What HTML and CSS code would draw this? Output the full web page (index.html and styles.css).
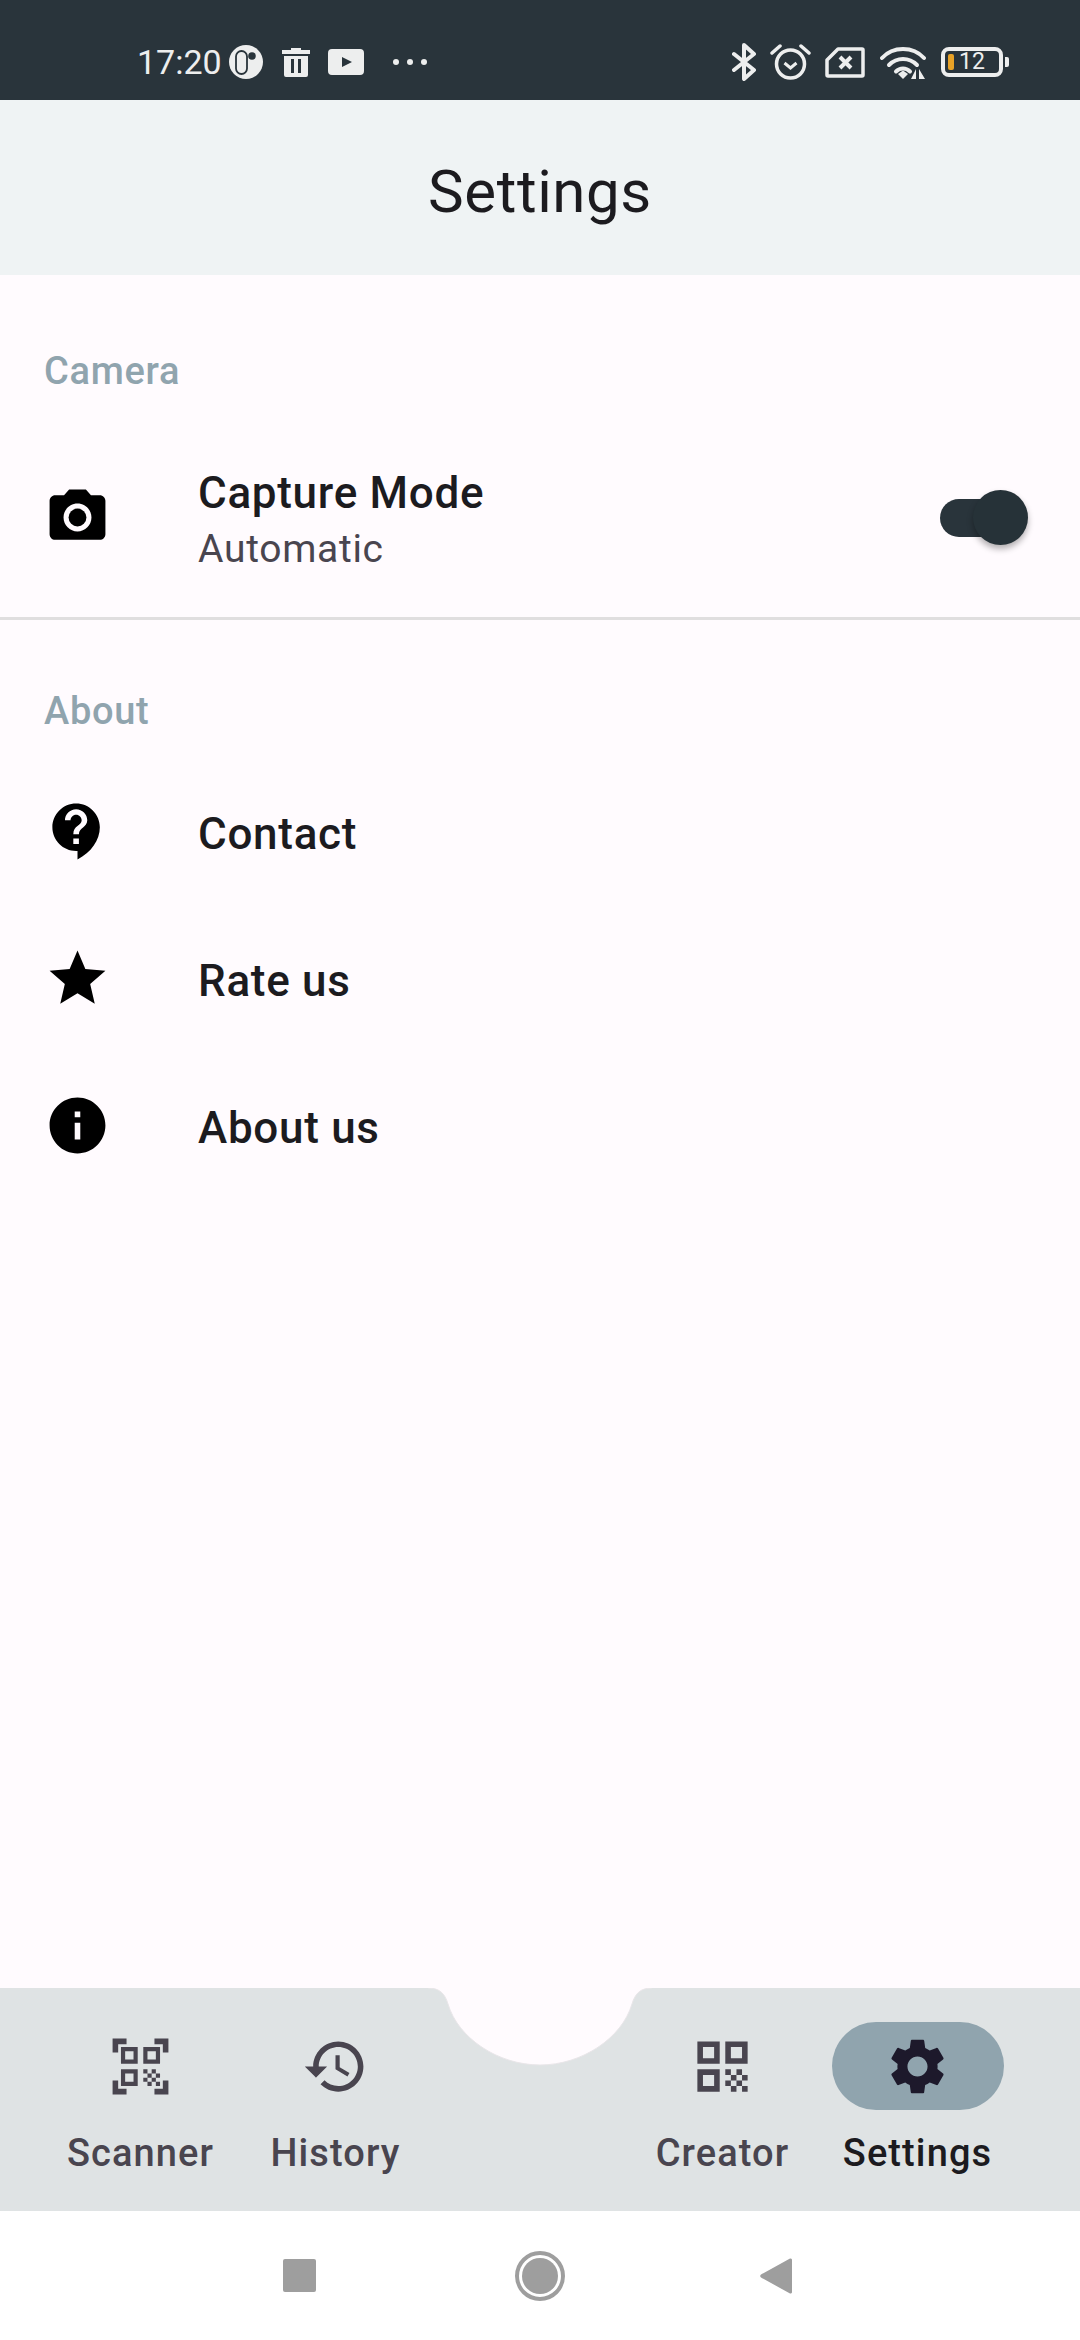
FILE: index.html
```html
<!DOCTYPE html>
<html lang="en">
<head>
    <meta charset="UTF-8">
    <title>Settings</title>
    <link rel="stylesheet" href="styles.css">
</head>
<body>
<div id="phone">
    <div id="status">
        <div class="status-left">
            <span class="time">17:20</span>
            <svg class="ico-dot" viewBox="0 0 34 34"><circle cx="17" cy="17" r="17" fill="#edeeee"/><rect x="7" y="6" width="11" height="23" rx="5.500" fill="#edeeee" stroke="#29343b" stroke-width="1.800"/><circle cx="23" cy="11" r="3.800" fill="#29343b"/></svg>
            <svg class="ico-trash" viewBox="0 0 28 30"><path d="M9 3V1h10v2h9v4H0V3z M2 9h24v19a2 2 0 0 1-2 2H4a2 2 0 0 1-2-2z M9 12v14h3V12z M16 12v14h3V12z" fill="#edeeee" fill-rule="evenodd"/></svg>
            <svg class="ico-tube" viewBox="0 0 36 26"><path d="M4 0h28a4 4 0 0 1 4 4v18a4 4 0 0 1-4 4H4a4 4 0 0 1-4-4V4a4 4 0 0 1 4-4z M14 8v10l10-5z" fill="#edeeee" fill-rule="evenodd"/></svg>
            <div class="more"><i></i><i></i><i></i></div>
        </div>
        <div class="status-right">
            <svg class="ico-bt" viewBox="0 0 25 38"><path d="M2 11l20 16-10 9V2l10 9L2 27" fill="none" stroke="#edeeee" stroke-width="4" stroke-linejoin="round" stroke-linecap="round"/></svg>
            <svg class="ico-alarm" viewBox="0 0 41 36"><circle cx="20.500" cy="20" r="14" fill="none" stroke="#edeeee" stroke-width="3.500"/><path d="M14.500 19l6 5 6-5" fill="none" stroke="#edeeee" stroke-width="3"/><path d="M2 9l8-7 M39 9l-8-7" fill="none" stroke="#edeeee" stroke-width="3.500" stroke-linecap="round"/></svg>
            <svg class="ico-sim" viewBox="0 0 40 31"><path d="M13 2h24a1 1 0 0 1 1 1v25a1 1 0 0 1-1 1H3a1 1 0 0 1-1-1V13z" fill="none" stroke="#edeeee" stroke-width="3.500" stroke-linejoin="round"/><path d="M15 10l11 11 M26 10L15 21" fill="none" stroke="#edeeee" stroke-width="4"/></svg>
            <svg class="ico-wifi" viewBox="0 0 46 35"><path d="M2 13C13 1 33 1 44 13" fill="none" stroke="#edeeee" stroke-width="4" stroke-linecap="round"/><path d="M9 20c8-8 20-8 28 0" fill="none" stroke="#edeeee" stroke-width="4" stroke-linecap="round"/><path d="M16 26.500c4-4 10-4 14 0" fill="none" stroke="#edeeee" stroke-width="4" stroke-linecap="round"/><path d="M18 29l5-3.500 5 3.500-5 5z" fill="#edeeee"/><path d="M36 24v10h-5z M39 24v10h6z" fill="#edeeee"/></svg>
            <div class="battery">
                <div class="cell"><i></i><span>12</span></div>
                <b></b>
            </div>
        </div>
    </div>

    <div id="appbar">Settings</div>

    <div id="content">
        <div class="section first">
            <div class="sec-title">Camera</div>
            <div class="row two-line">
                <svg class="row-ico" viewBox="0 0 24 24"><circle cx="12" cy="12" r="3.200"/><path d="M9 2L7.170 4H4c-1.100 0-2 .9-2 2v12c0 1.100.9 2 2 2h16c1.100 0 2-.9 2-2V6c0-1.100-.9-2-2-2h-3.170L15 2H9zm3 15c-2.760 0-5-2.240-5-5s2.240-5 5-5 5 2.240 5 5-2.240 5-5 5z"/></svg>
                <div class="row-text">
                    <div class="row-title">Capture Mode</div>
                    <div class="row-sub">Automatic</div>
                </div>
                <div class="switch"><div class="thumb"></div></div>
            </div>
        </div>
        <div class="divider"></div>
        <div class="section">
            <div class="sec-title">About</div>
            <div class="row">
                <svg class="row-ico" viewBox="0 0 24 24"><path d="M11.500 2C6.810 2 3 5.810 3 10.500S6.810 19 11.500 19h.5v3c4.860-2.340 8-7 8-11.500C20 5.810 16.190 2 11.500 2zm1 14.500h-2v-2h2v2zm0-3.500h-2c0-3.250 3-3 3-5 0-1.100-.9-2-2-2s-2 .9-2 2h-2c0-2.210 1.790-4 4-4s4 1.790 4 4c0 2.500-3 2.750-3 5z"/></svg>
                <div class="row-title">Contact</div>
            </div>
            <div class="row">
                <svg class="row-ico" viewBox="0 0 24 24"><path d="M12 17.270L18.180 21l-1.640-7.030L22 9.240l-7.190-.61L12 2 9.190 8.630 2 9.240l5.460 4.730L5.820 21z"/></svg>
                <div class="row-title">Rate us</div>
            </div>
            <div class="row">
                <svg class="row-ico" viewBox="0 0 24 24"><path d="M12 2C6.480 2 2 6.480 2 12s4.480 10 10 10 10-4.480 10-10S17.520 2 12 2zm1 15h-2v-6h2v6zm0-8h-2V7h2v2z"/></svg>
                <div class="row-title">About us</div>
            </div>
        </div>
    </div>

    <div id="nav">
        <svg class="notch" viewBox="0 0 240 80"><path d="M8 0C20 0 25 6 28 16C38 50 78 77 120 77C162 77 202 50 212 16C215 6 220 0 232 0z" fill="#fffbfe"/><path d="M8 0C20 0 25 6 28 16C38 50 78 77 120 77C162 77 202 50 212 16C215 6 220 0 232 0" fill="none" stroke="#e9e6e9" stroke-width="1"/></svg>
        <div class="tab">
            <div class="pill"><svg viewBox="0 0 24 24"><path d="M9.500 6.500v3h-3v-3h3M11 5H5v6h6V5zm-1.500 9.500v3h-3v-3h3M11 13H5v6h6v-6zm6.500-6.500v3h-3v-3h3M19 5h-6v6h6V5zm-6 8h1.500v1.500H13V13zm1.500 1.500H16V16h-1.500v-1.500zM16 13h1.500v1.500H16V13zm-3 3h1.500v1.500H13V16zm1.500 1.500H16V19h-1.500v-1.500zM16 16h1.500v1.500H16V16zm1.500-1.500H19V16h-1.500v-1.500zm0 3H19V19h-1.500v-1.500zM22 7h-2V4h-3V2h5v5zm0 15v-5h-2v3h-3v2h5zM2 22h5v-2H4v-3H2v5zM2 2v5h2V4h3V2H2z"/></svg></div>
            <span>Scanner</span>
        </div>
        <div class="tab">
            <div class="pill"><svg viewBox="0 0 24 24"><path d="M13 3c-4.970 0-9 4.030-9 9H1l3.890 3.890.07.14L9 12H6c0-3.870 3.130-7 7-7s7 3.130 7 7-3.130 7-7 7c-1.930 0-3.680-.79-4.940-2.060l-1.420 1.420C8.270 19.990 10.510 21 13 21c4.970 0 9-4.030 9-9s-4.030-9-9-9zm-1 5v5l4.280 2.540.72-1.210-3.500-2.080V8H12z"/></svg></div>
            <span>History</span>
        </div>
        <div class="tab-gap"></div>
        <div class="tab">
            <div class="pill"><svg viewBox="0 0 24 24"><path d="M3 11h8V3H3v8zm2-6h4v4H5V5zM3 21h8v-8H3v8zm2-6h4v4H5v-4zM13 3v8h8V3h-8zm6 6h-4V5h4v4zM19 19h2v2h-2zM13 13h2v2h-2zM15 15h2v2h-2zM13 17h2v2h-2zM15 19h2v2h-2zM17 17h2v2h-2zM17 13h2v2h-2zM19 15h2v2h-2z"/></svg></div>
            <span>Creator</span>
        </div>
        <div class="tab active">
            <div class="pill"><svg viewBox="0 0 24 24"><path d="M19.140 12.940c.04-.3.06-.61.06-.94 0-.32-.02-.64-.07-.94l2.030-1.580c.18-.14.23-.41.12-.61l-1.920-3.320c-.12-.22-.37-.29-.59-.22l-2.390.96c-.5-.38-1.030-.7-1.620-.94l-.36-2.540c-.04-.24-.24-.41-.48-.41h-3.840c-.24 0-.43.17-.47.41l-.36 2.540c-.59.24-1.130.57-1.620.94l-2.390-.96c-.22-.08-.47 0-.59.22L2.740 8.870c-.12.21-.08.47.12.61l2.030 1.580c-.05.3-.09.63-.09.94s.02.64.07.94l-2.030 1.580c-.18.14-.23.41-.12.61l1.920 3.320c.12.22.37.29.59.22l2.390-.96c.5.38 1.030.7 1.620.94l.36 2.540c.05.24.24.41.48.41h3.840c.24 0 .44-.17.47-.41l.36-2.540c.59-.24 1.130-.56 1.620-.94l2.390.96c.22.08.47 0 .59-.22l1.920-3.320c.12-.22.07-.47-.12-.61l-2.010-1.580zM12 15.600c-1.980 0-3.600-1.620-3.600-3.600s1.620-3.600 3.600-3.600 3.600 1.620 3.600 3.600-1.620 3.600-3.600 3.600z"/></svg></div>
            <span>Settings</span>
        </div>
    </div>

    <div id="sysbar">
        <div class="sys-square"></div>
        <div class="sys-home"><i></i></div>
        <svg class="sys-back" viewBox="0 0 32 38"><path d="M30 1.500a1.500 1.500 0 0 1 2 1.500v32a1.500 1.500 0 0 1-2 1.500L1 20.500a1.800 1.800 0 0 1 0-3z" fill="#9e9e9e"/></svg>
    </div>
</div>
</body>
</html>
```

FILE: styles.css
```css
*{
    margin:0;
    padding:0;
    box-sizing:border-box;
}
body{
    background:#fffbfe;
    font-family:Roboto,"Liberation Sans",sans-serif;
}
#phone{
    width:1080px;
    height:2340px;
    display:flex;
    flex-direction:column;
    overflow:hidden;
}

/* status bar */
#status{
    height:100px;
    flex:none;
    background:#29343b;
    color:#edeeee;
    display:flex;
    justify-content:space-between;
    padding:0 71px 0 137px;
}
.status-left,.status-right{
    display:flex;
    align-items:center;
    padding-top:24px;
}
.time{
    font-size:34px;
    width:92px;
}
.ico-dot{width:34px;height:34px;margin-right:19px;}
.ico-trash{width:28px;height:30px;margin-right:18px;}
.ico-tube{width:36px;height:26px;margin-right:29px;}
.more{
    display:flex;
    gap:8px;
}
.more i{
    width:6px;
    height:6px;
    border-radius:50%;
    background:#edeeee;
}
.ico-bt{width:25px;height:38px;margin-right:13px;}
.ico-alarm{width:41px;height:36px;margin-right:14px;}
.ico-sim{width:40px;height:31px;margin-right:15px;}
.ico-wifi{width:46px;height:35px;margin-right:15px;}
.battery{
    display:flex;
    align-items:center;
    gap:2px;
}
.cell{
    width:62px;
    height:30px;
    border:4px solid #edeeee;
    border-radius:8px;
    display:flex;
    align-items:center;
    padding-left:3px;
    gap:5px;
}
.cell i{
    width:6px;
    height:16px;
    border-radius:2px;
    background:#e8a227;
}
.cell span{
    font-size:23px;
    line-height:22px;
}
.battery b{
    width:4px;
    height:10px;
    border-radius:0 2px 2px 0;
    background:#edeeee;
}

/* top bar */
#appbar{
    height:175px;
    flex:none;
    background:#eff3f4;
    color:#1c1b1f;
    font-size:60px;
    letter-spacing:.6px;
    padding-top:7px;
    display:flex;
    align-items:center;
    justify-content:center;
}

/* list */
#content{
    flex:1;
}
.section{
    padding-top:66px;
}
.section.first{
    padding-top:71px;
}
.sec-title{
    height:50px;
    line-height:50px;
    margin-bottom:22px;
    padding-left:44px;
    font-size:38px;
    font-weight:470;
    letter-spacing:.7px;
    color:#90a4ae;
}
.row{
    height:147px;
    display:flex;
    align-items:center;
    padding-left:44px;
}
.row.two-line{
    height:199px;
}
.row-ico{
    width:67px;
    height:67px;
    margin-right:87px;
    flex:none;
    fill:#000;
}
.row-text{
    flex:1;
    padding-top:7px;
}
.row-title{
    font-size:44px;
    font-weight:470;
    letter-spacing:.7px;
    line-height:56px;
    color:#1c1b1f;
    padding-top:5px;
}
.row-text .row-title{
    padding-top:0;
}
.row-sub{
    font-size:39px;
    letter-spacing:.7px;
    line-height:56px;
    color:#49454f;
}
.switch{
    width:71px;
    height:38px;
    margin-right:69px;
    border-radius:19px;
    background:#29343b;
    position:relative;
}
.thumb{
    width:55px;
    height:55px;
    border-radius:50%;
    background:#263238;
    box-shadow:0 4px 6px rgba(0,0,0,.3);
    position:absolute;
    right:-17px;
    top:-9px;
}
.divider{
    height:3px;
    background:#e0dedf;
}

/* bottom nav */
#nav{
    height:223px;
    flex:none;
    background:#dfe3e4;
    display:flex;
    padding:34px 0 0 43px;
    position:relative;
}
.notch{
    position:absolute;
    left:420px;
    top:0;
    width:240px;
    height:80px;
}
.tab{
    width:195px;
    display:flex;
    flex-direction:column;
    align-items:center;
    color:#49454f;
    position:relative;
}
.tab-gap{
    width:192px;
}
.pill{
    width:172px;
    height:88px;
    border-radius:44px;
    display:flex;
    align-items:center;
    justify-content:center;
    flex:none;
}
.pill svg{
    width:67px;
    height:67px;
    fill:#49454f;
}
.tab span{
    font-size:38px;
    font-weight:470;
    letter-spacing:1.1px;
    line-height:48px;
    margin-top:19px;
}
.tab.active{
    color:#1c1b1f;
}
.tab.active .pill{
    background:#90a4ae;
}
.tab.active .pill svg{
    fill:#1d192b;
}

/* android buttons */
#sysbar{
    height:129px;
    flex:none;
    background:#fff;
    display:flex;
    align-items:center;
    padding-left:283px;
}
.sys-square{
    width:33px;
    height:33px;
    border-radius:2px;
    background:#9e9e9e;
}
.sys-home{
    width:50px;
    height:50px;
    margin:0 195px 0 199px;
    border:4px solid #9e9e9e;
    border-radius:50%;
    display:flex;
    align-items:center;
    justify-content:center;
}
.sys-home i{
    width:36px;
    height:36px;
    border-radius:50%;
    background:#9e9e9e;
}
.sys-back{
    width:32px;
    height:38px;
}
```
